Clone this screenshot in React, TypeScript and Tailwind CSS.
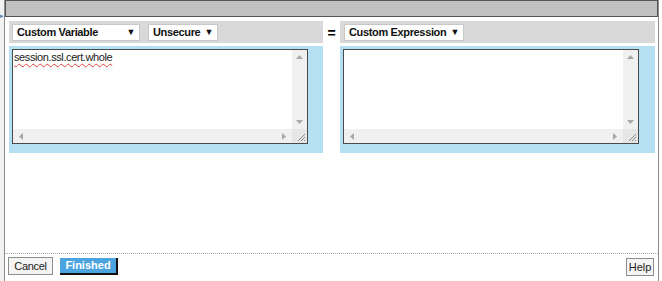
import React from 'react';

const font = { fontFamily: '"Liberation Sans", Arial, sans-serif' };

function Dropdown({ label, width }: { label: string; width: string }) {
  return (
    <div
      className={`${width} h-[17px] bg-white border border-[#c8c8c8] flex items-center justify-between pl-[4px] pr-[4px] text-[11px] font-bold text-[#111] leading-none whitespace-nowrap tracking-[-0.35px]`}
    >
      <span>{label}</span>
      <span className="text-[9px]">▼</span>
    </div>
  );
}

function FakeTextarea({ value }: { value?: string }) {
  return (
    <div className="w-[296px] h-[95px] border border-[#4a4a4a] bg-white flex flex-col">
      <div className="flex flex-1 min-h-0">
        <div className="flex-1 pl-[1px] pt-[1px] text-[11px] leading-[13px] text-[#222] tracking-[-0.4px]">
          {value && (
            <span className="underline decoration-wavy decoration-[#e04040] underline-offset-2 decoration-1">
              {value}
            </span>
          )}
        </div>
        {/* vertical scrollbar */}
        <div className="w-[15px] bg-[#f0f0f0] flex flex-col items-center justify-between py-[5px]">
          <svg width="7" height="4" viewBox="0 0 7 4"><path d="M0 4 L3.5 0 L7 4 Z" fill="#a8a8a8" /></svg>
          <svg width="7" height="4" viewBox="0 0 7 4"><path d="M0 0 L3.5 4 L7 0 Z" fill="#a8a8a8" /></svg>
        </div>
      </div>
      <div className="h-[14px] flex">
        <div className="flex-1 bg-[#f0f0f0] flex items-center justify-between px-[6px]">
          <svg width="4" height="7" viewBox="0 0 4 7"><path d="M4 0 L0 3.5 L4 7 Z" fill="#a8a8a8" /></svg>
          <svg width="4" height="7" viewBox="0 0 4 7"><path d="M0 0 L4 3.5 L0 7 Z" fill="#a8a8a8" /></svg>
        </div>
        <div className="w-[15px] bg-[#e6e6e6] flex items-end justify-end p-[1px]">
          <svg width="9" height="9" viewBox="0 0 9 9">
            <path d="M8 1 L1 8 M8 4 L4 8 M8 7 L7 8" stroke="#8a8a8a" strokeWidth="1" />
          </svg>
        </div>
      </div>
    </div>
  );
}

export default function App() {
  return (
    <div className="w-[662px] h-[281px] bg-white flex overflow-hidden" style={font}>
      {/* gutter of the page behind */}
      <div className="w-[4px] bg-[#f2f2f2] flex flex-col">
        <div className="h-[12px]" />
        <span className="text-[7px] leading-none text-[#5a7fb0]">▸</span>
      </div>

      <div className="w-[655px] flex flex-col border-l border-r border-[#8c8c8c]">
        {/* title bar */}
        <div className="h-[17px] bg-[#c0c0c0] border border-[#555]" />

        {/* expression rows */}
        <div className="flex pl-[4px] pt-[4px]">
          <div className="w-[314px] flex flex-col">
            <div className="h-[22px] bg-[#d9d9d9] flex items-center gap-[8px] pl-[3px]">
              <Dropdown label="Custom Variable" width="w-[128px]" />
              <Dropdown label="Unsecure" width="w-[70px]" />
            </div>
            <div className="mt-[3px] h-[107px] bg-[#b5dff3] pl-[3px] pt-[3px]">
              <FakeTextarea value="session.ssl.cert.whole" />
            </div>
          </div>

          <div className="w-[17px] pt-[3px] text-center text-[14px] font-bold leading-[18px] text-black">=</div>

          <div className="w-[315px] flex flex-col">
            <div className="h-[22px] bg-[#d9d9d9] flex items-center pl-[4px]">
              <Dropdown label="Custom Expression" width="w-[120px]" />
            </div>
            <div className="mt-[3px] h-[107px] bg-[#b5dff3] pl-[3px] pt-[3px]">
              <FakeTextarea />
            </div>
          </div>
        </div>

        <div className="flex-1" />

        {/* footer */}
        <div className="border-t border-dotted border-[#a8a8a8] h-[28px] flex items-start justify-between pt-[3px] pl-[3px] pr-[4px]">
          <div className="flex items-center gap-[7px]">
            <button className="h-[18px] w-[45px] border border-[#8e8e8e] bg-[#f4f4f4] text-[11px] text-[#222] leading-none tracking-[-0.3px]">
              Cancel
            </button>
            <button className="h-[17px] w-[58px] bg-[#4ba3df] text-white text-[11px] font-bold leading-none border-r-2 border-b-2 border-[#111]">
              Finished
            </button>
          </div>
          <button className="h-[18px] w-[28px] border border-[#8e8e8e] bg-[#f4f4f4] text-[11px] text-[#222] leading-none mt-[1px]">
            Help
          </button>
        </div>
      </div>
    </div>
  );
}
